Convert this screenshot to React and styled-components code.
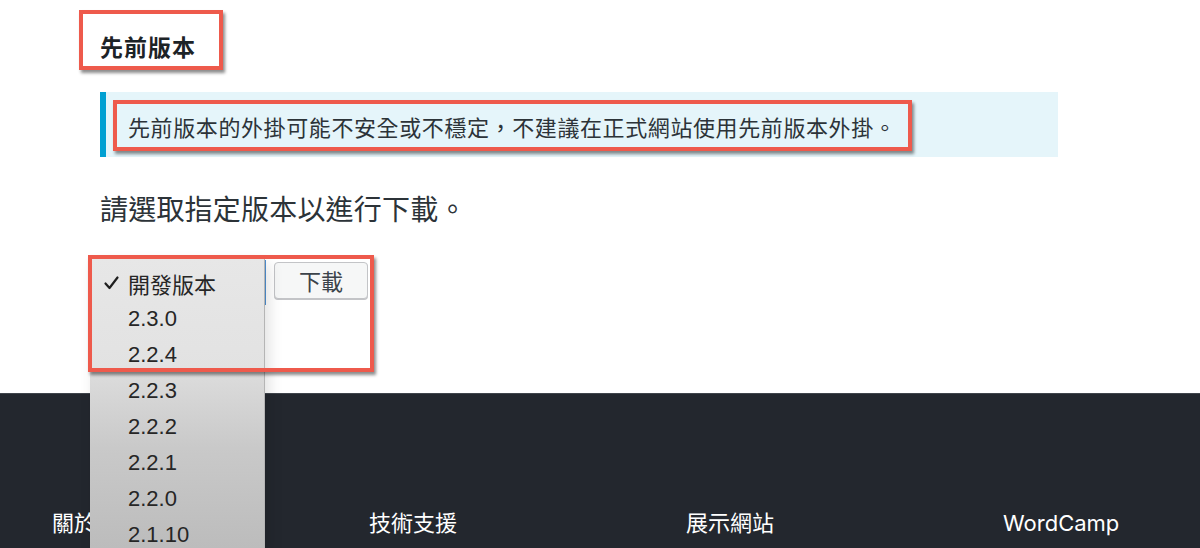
import React from 'react';
import styled, { createGlobalStyle } from 'styled-components';

const GlobalStyle = createGlobalStyle`
  html, body {
    margin: 0;
    padding: 0;
    background: #fff;
    overflow-x: hidden;
  }
  body {
    font-family: "Noto Sans CJK TC", "Noto Sans", sans-serif;
    color: #2c3338;
  }
`;

const versions = ['2.3.0', '2.2.4', '2.2.3', '2.2.2', '2.2.1', '2.2.0', '2.1.10'];
const footerLinks = ['關於', '技術支援', '展示網站', 'WordCamp'];

const Main = styled.main`
  padding: 30px 0 88px 100px;
  width: 958px;
`;

// red annotation frame drawn over a marked element
const Callout = styled.span`
  position: absolute;
  left: ${p => p.$l}px;
  top: ${p => p.$t}px;
  width: ${p => p.$w}px;
  height: ${p => p.$h}px;
  box-sizing: border-box;
  border: 4px solid #ee5a4c;
  box-shadow: 2px 3px 3px rgba(0, 0, 0, 0.45);
  pointer-events: none;
  z-index: 5;
`;

const Marked = styled.span`
  position: relative;
  display: inline-block;
`;

const Heading = styled.h3`
  margin: 0;
  font-size: 23px;
  line-height: 32px;
  font-weight: 700;
  letter-spacing: 1px;
  color: #1d2327;
`;

const Notice = styled.div`
  margin-top: 30px;
  background: #e5f5fa;
  border-left: 6px solid #00a0d2;
  padding: 18px 22px 14px;
  font-size: 22px;
  line-height: 33px;
  letter-spacing: 0.6px;
  color: #2c3338;
`;

const Prompt = styled.p`
  margin: 31px 0 0;
  font-size: 28px;
  line-height: 40px;
  letter-spacing: 0.2px;
  color: #2c3338;
`;

const SelectRow = styled.div`
  position: relative;
  display: flex;
  align-items: flex-start;
  gap: 8px;
  margin-top: 34px;
`;

const SelectBox = styled.div`
  width: 165px;
  height: 45px;
  margin-top: -2px;
  border-right: 1px solid #4f8fd0;
`;

const Button = styled.button`
  width: 94px;
  height: 37px;
  border: 1px solid #c3c4c7;
  border-radius: 4px;
  background: #f6f7f7;
  box-shadow: 0 1px 0 #c3c4c7;
  font-family: "Noto Sans CJK TC", sans-serif;
  font-size: 22px;
  line-height: 1;
  color: #3c434a;
  padding: 0 0 2px;
`;

const Dropdown = styled.ul`
  position: absolute;
  left: -10px;
  top: -4px;
  width: 175px;
  height: 290px;
  margin: 0;
  padding: 7px 0 0;
  list-style: none;
  box-sizing: border-box;
  background: linear-gradient(
    to bottom,
    #e7e7e7 0,
    #e2e2e2 112px,
    #dadada 122px,
    #c9c9c9 190px,
    #bcbcbc 290px
  );
  border-right: 1px solid #b5b5b5;
  box-shadow: 4px 6px 14px rgba(0, 0, 0, 0.12);
  z-index: 3;
  overflow: hidden;
`;

const Option = styled.li`
  display: flex;
  align-items: center;
  height: 36px;
  padding-left: 14px;
  font-family: "Liberation Sans", "Noto Sans CJK TC", sans-serif;
  font-size: 22px;
  color: #262626;
`;

const Check = styled.span`
  display: flex;
  align-items: center;
  width: 24px;
`;

const Footer = styled.footer`
  background: #23272e;
  border-top: 1px solid #40454c;
  min-height: 180px;
  padding: 114px 0 0 52px;
  display: grid;
  grid-template-columns: repeat(3, 317px) 1fr;
  align-content: start;
`;

const FooterLink = styled.a`
  font-family: "Inter", "Noto Sans CJK TC", sans-serif;
  font-size: 22px;
  line-height: 30px;
  color: #fff;
  text-decoration: none;
`;

const CheckIcon = () => (
  <svg width="15" height="14" viewBox="0 0 15 14" aria-hidden="true">
    <path d="M1.5 7.5 L5.5 12 L13.5 1.5" fill="none" stroke="#1f1f1f" strokeWidth="2.2" strokeLinecap="round" strokeLinejoin="round" />
  </svg>
);

export default function App() {
  return (
    <>
      <GlobalStyle />
      <Main>
        <Heading>
          <Marked>
            先前版本
            <Callout $l={-21} $t={-20} $w={144} $h={60} />
          </Marked>
        </Heading>

        <Notice>
          <Marked>
            先前版本的外掛可能不安全或不穩定，不建議在正式網站使用先前版本外掛。
            <Callout $l={-15} $t={-10} $w={799} $h={51} />
          </Marked>
        </Notice>

        <Prompt>請選取指定版本以進行下載。</Prompt>

        <SelectRow>
          <SelectBox />
          <Button>下載</Button>
          <Dropdown>
            <Option>
              <Check><CheckIcon /></Check>開發版本
            </Option>
            {versions.map(v => (
              <Option key={v}>
                <Check />
                {v}
              </Option>
            ))}
          </Dropdown>
          <Callout $l={-12} $t={-7} $w={286} $h={117} />
        </SelectRow>
      </Main>

      <Footer>
        {footerLinks.map(link => (
          <FooterLink key={link} href="#">{link}</FooterLink>
        ))}
      </Footer>
    </>
  );
}
